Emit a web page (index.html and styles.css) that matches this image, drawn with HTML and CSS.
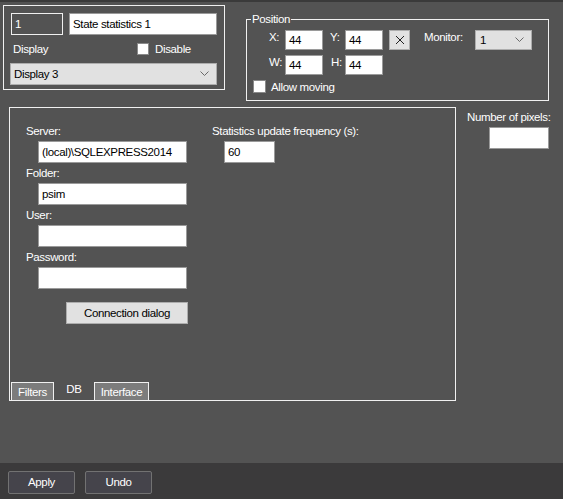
FILE: index.html
```html
<!DOCTYPE html>
<html>
<head>
<meta charset="utf-8">
<link rel="stylesheet" href="styles.css">
</head>
<body>
<div class="strip"></div>
<div class="top">
  <div class="box1">
    <div class="r1">
      <div class="idf">1</div>
      <div class="field namef">State statistics 1</div>
    </div>
    <div class="r2">
      <span class="displab">Display</span>
      <span class="chk"></span>
      <span class="chklab">Disable</span>
    </div>
    <div class="sel dispsel">
      <span>Display 3</span>
      <svg class="chev" width="9" height="6" viewBox="0 0 9 6"><path d="M0.5 0.5 L4.5 4.5 L8.5 0.5" fill="none" stroke="#6a6a6a" stroke-width="1"/></svg>
    </div>
  </div>
  <fieldset class="pos">
    <legend>Position</legend>
    <div class="prow">
      <span class="plab wx">X:</span>
      <div class="field num">44</div>
      <span class="plab wy">Y:</span>
      <div class="field num">44</div>
      <div class="xbtn"><svg width="10" height="10" viewBox="0 0 10 10"><path d="M1 1 L9 9 M9 1 L1 9" stroke="#222" stroke-width="1" fill="none"/></svg></div>
      <span class="plab mon">Monitor:</span>
      <div class="sel monsel">
        <span>1</span>
        <svg class="chev" width="9" height="6" viewBox="0 0 9 6"><path d="M0.5 0.5 L4.5 4.5 L8.5 0.5" fill="none" stroke="#6a6a6a" stroke-width="1"/></svg>
      </div>
    </div>
    <div class="prow prow2">
      <span class="plab wx">W:</span>
      <div class="field num">44</div>
      <span class="plab wh">H:</span>
      <div class="field num">44</div>
    </div>
    <div class="amrow">
      <span class="chk chk13"></span>
      <span class="amlab">Allow moving</span>
    </div>
  </fieldset>
</div>
<div class="main">
  <div class="panel">
    <div class="pcontent">
      <div class="lcol">
        <div class="flab">Server:</div>
        <div class="field wide">(local)\SQLEXPRESS2014</div>
        <div class="flab">Folder:</div>
        <div class="field wide">psim</div>
        <div class="flab">User:</div>
        <div class="field wide"></div>
        <div class="flab">Password:</div>
        <div class="field wide"></div>
        <div class="cbtn">Connection dialog</div>
      </div>
      <div class="rcol">
        <div class="flab">Statistics update frequency (s):</div>
        <div class="field freq">60</div>
      </div>
    </div>
    <div class="tabs">
      <div class="tab">Filters</div>
      <div class="tab active">DB</div>
      <div class="tab itab">Interface</div>
    </div>
  </div>
  <div class="side">
    <div class="flab">Number of pixels:</div>
    <div class="field pix"></div>
  </div>
</div>
<div class="bottom">
  <div class="bbtn">Apply</div>
  <div class="bbtn">Undo</div>
</div>
</body>
</html>
```
FILE: styles.css
```css
html, body {
  margin: 0;
  padding: 0;
}
body {
  width: 563px;
  height: 499px;
  overflow: hidden;
  background: #535353;
  font-family: "Liberation Sans", Arial, sans-serif;
  font-size: 11.5px;
  letter-spacing: -0.35px;
  color: #fff;
  display: flex;
  flex-direction: column;
}
.strip {
  height: 2px;
  background: #3a3a3a;
}
.top {
  display: flex;
  align-items: flex-start;
}
.box1 {
  margin: 3px 0 0 3px;
  width: 222px;
  height: 85px;
  box-sizing: border-box;
  border: 1px solid #f0f0f0;
  padding: 7px 0 0 6px;
}
.r1 {
  display: flex;
  gap: 6px;
  margin-left: 1px;
}
.idf {
  width: 52px;
  height: 22px;
  box-sizing: border-box;
  border: 1px solid #f0f0f0;
  padding-left: 3px;
  line-height: 20px;
  color: #fff;
}
.field {
  background: #fff;
  border: 1px solid #9a9a9a;
  box-sizing: border-box;
  color: #000;
  padding-left: 3px;
  white-space: nowrap;
  overflow: hidden;
}
.namef {
  width: 148px;
  height: 22px;
  line-height: 20px;
}
.r2 {
  display: flex;
  align-items: center;
  height: 28px;
  padding-left: 3px;
}
.displab {
  width: 124px;
}
.chk {
  width: 12px;
  height: 12px;
  box-sizing: border-box;
  background: #fff;
  border: 1px solid #8a8a8a;
}
.chklab {
  margin-left: 6px;
}
.sel {
  background: #e1e1e1;
  border: 1px solid #adadad;
  box-sizing: border-box;
  color: #000;
  display: flex;
  align-items: center;
  justify-content: space-between;
}
.dispsel {
  width: 207px;
  height: 22px;
  padding: 0 7px 0 3px;
}
.chev {
  display: block;
}
.pos {
  margin: 10px 0 0 21px;
  width: 303px;
  box-sizing: border-box;
  border: 1px solid #f0f0f0;
  padding: 4px 0 7px 6px;
  min-inline-size: 0;
}
.pos legend {
  padding: 0 1px;
  margin-left: -2px;
  line-height: 14px;
  color: #fff;
}
.prow {
  display: flex;
  align-items: flex-start;
  height: 20px;
  margin-left: 16px;
}
.prow2 {
  margin-top: 5px;
}
.plab {
  line-height: 14px;
}
.wx { width: 16px; }
.wy { width: 15px; margin-left: 7px; }
.wh { width: 14px; margin-left: 8px; }
.num {
  width: 38px;
  height: 20px;
  line-height: 18px;
}
.xbtn {
  margin-left: 6px;
  width: 21px;
  height: 20px;
  box-sizing: border-box;
  background: #e1e1e1;
  border: 1px solid #adadad;
  display: flex;
  align-items: center;
  justify-content: center;
}
.mon {
  margin-left: 14px;
  width: 51px;
}
.monsel {
  width: 57px;
  height: 20px;
  padding: 0 7px 0 4px;
}
.amrow {
  display: flex;
  align-items: center;
  margin-top: 5px;
  height: 13px;
}
.chk13 {
  width: 13px;
  height: 13px;
}
.amlab {
  margin-left: 5px;
}
.main {
  display: flex;
  align-items: flex-start;
  margin-top: 6px;
}
.panel {
  margin-left: 9px;
  width: 447px;
  height: 294px;
  box-sizing: border-box;
  border: 1px solid #f0f0f0;
  display: flex;
  flex-direction: column;
}
.pcontent {
  display: flex;
  padding: 16px 0 0 16px;
}
.lcol {
  width: 186px;
}
.flab {
  line-height: 14px;
  height: 14px;
  white-space: nowrap;
}
.lcol .field, .rcol .field {
  margin-top: 3px;
  margin-bottom: 3px;
  height: 22px;
  line-height: 20px;
}
.wide {
  margin-left: 12px;
  width: 149px;
}
.freq {
  margin-left: 12px;
  width: 51px;
}
.cbtn {
  margin: 13px 0 0 40px;
  width: 122px;
  height: 22px;
  box-sizing: border-box;
  background: #e1e1e1;
  border: 1px solid #adadad;
  color: #000;
  text-align: center;
  line-height: 20px;
}
.tabs {
  margin-top: auto;
  display: flex;
  align-items: flex-end;
  padding-left: 1px;
}
.tab {
  height: 18px;
  box-sizing: border-box;
  border: 1px solid #f0f0f0;
  border-bottom: none;
  background: #7c7c7c;
  color: #fff;
  text-align: center;
  line-height: 18px;
  width: 43px;
}
.tab.active {
  width: 40px;
  border: none;
  background: transparent;
  line-height: 14px;
}
.itab {
  width: 55px;
}
.side {
  margin-left: 11px;
  padding-top: 3px;
}
.pix {
  margin: 3px 0 0 22px;
  width: 60px;
  height: 22px;
}
.bottom {
  margin-top: auto;
  height: 36px;
  background: #3b3a3b;
  display: flex;
  gap: 10px;
  padding: 8px 0 0 8px;
  box-sizing: border-box;
}
.bbtn {
  width: 67px;
  height: 23px;
  box-sizing: border-box;
  background: #45444b;
  border: 1px solid #727272;
  border-radius: 2px;
  color: #fff;
  text-align: center;
  line-height: 21px;
}
```
